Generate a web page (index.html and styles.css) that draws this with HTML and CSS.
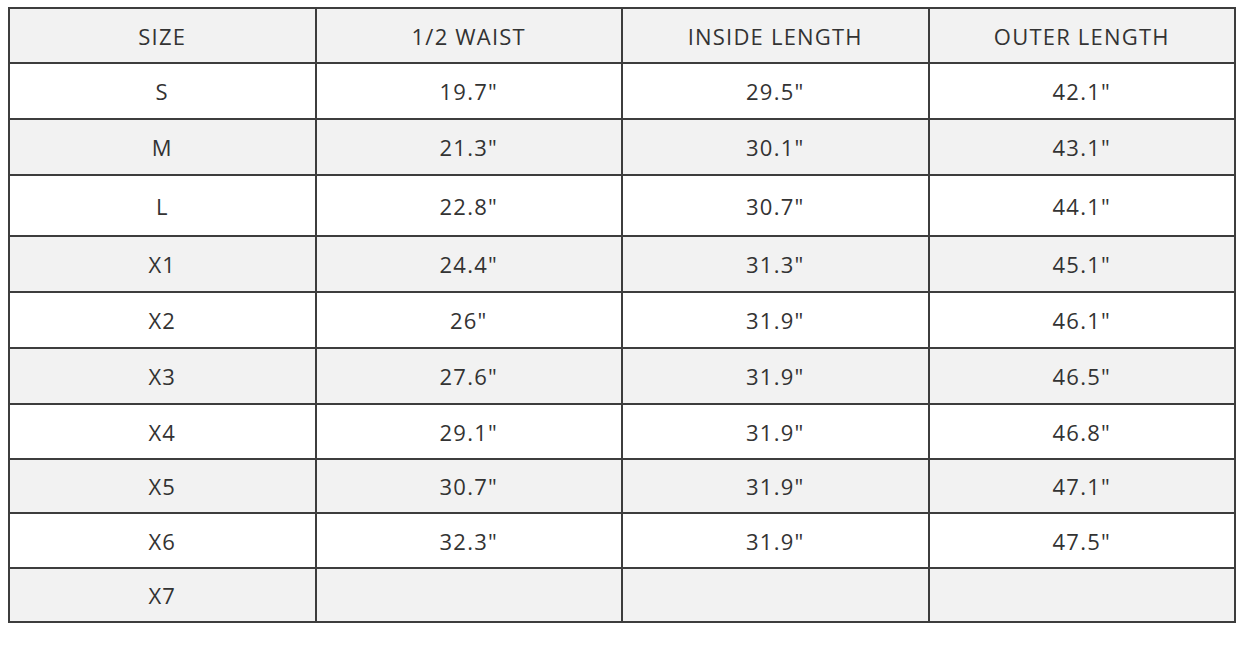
FILE: index.html
```html
<!DOCTYPE html>
<html>
<head>
<meta charset="utf-8">
<link rel="stylesheet" href="styles.css">
</head>
<body>
<table class="size-table">
  <thead>
    <tr class="row-header"><th>SIZE</th><th>1/2 WAIST</th><th>INSIDE LENGTH</th><th>OUTER LENGTH</th></tr>
  </thead>
  <tbody>
    <tr class="r1"><td>S</td><td>19.7"</td><td>29.5"</td><td>42.1"</td></tr>
    <tr class="r2 alt"><td>M</td><td>21.3"</td><td>30.1"</td><td>43.1"</td></tr>
    <tr class="r3"><td>L</td><td>22.8"</td><td>30.7"</td><td>44.1"</td></tr>
    <tr class="r4 alt"><td>X1</td><td>24.4"</td><td>31.3"</td><td>45.1"</td></tr>
    <tr class="r5"><td>X2</td><td>26"</td><td>31.9"</td><td>46.1"</td></tr>
    <tr class="r6 alt"><td>X3</td><td>27.6"</td><td>31.9"</td><td>46.5"</td></tr>
    <tr class="r7"><td>X4</td><td>29.1"</td><td>31.9"</td><td>46.8"</td></tr>
    <tr class="r8 alt"><td>X5</td><td>30.7"</td><td>31.9"</td><td>47.1"</td></tr>
    <tr class="r9"><td>X6</td><td>32.3"</td><td>31.9"</td><td>47.5"</td></tr>
    <tr class="r10 alt"><td>X7</td><td></td><td></td><td></td></tr>
  </tbody>
</table>
</body>
</html>
```
FILE: styles.css
```css
html, body {
  margin: 0;
  padding: 0;
  background: #ffffff;
}
body {
  padding: 7px 0 0 8px;
  font-family: "Open Sans", "Liberation Sans", sans-serif;
  color: #333333;
}
.size-table {
  border-collapse: collapse;
  table-layout: fixed;
  width: 1228px;
}
.size-table th,
.size-table td {
  border: 2px solid #3d3d3d;
  text-align: center;
  vertical-align: middle;
  font-size: 22px;
  letter-spacing: 1.2px;
  font-weight: 500;
  padding: 0;
  width: 25%;
}
.row-header th { background: #f2f2f2; height: 53px; }
.alt td { background: #f2f2f2; }
.size-table td { height: 54px; }
.r3 td { height: 59px; }
.r7 td { height: 53px; }
.r8 td { height: 52px; }
.r9 td { height: 53px; }
.r10 td { height: 52px; }
```
